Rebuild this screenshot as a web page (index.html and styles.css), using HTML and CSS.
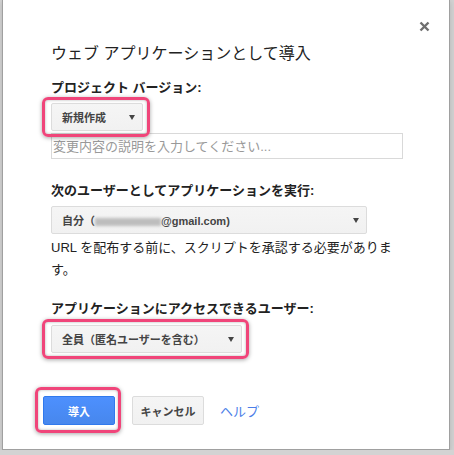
FILE: index.html
```html
<!DOCTYPE html>
<html lang="ja">
<head>
  <meta charset="UTF-8">
  <title>ウェブ アプリケーションとして導入</title>
  <link rel="stylesheet" href="styles.css">
</head>
<body>

  <!-- 導入ダイアログ -->
  <div class="dialog">
    <button class="close-btn" type="button" aria-label="閉じる">
      <svg width="11" height="11" viewBox="0 0 11 11">
        <path d="M1.5 1.5 L9.5 9.5 M9.5 1.5 L1.5 9.5" stroke="#6f6f6f" stroke-width="2.4" fill="none"/>
      </svg>
    </button>

    <div class="dialog-title">ウェブ アプリケーションとして導入</div>

    <div class="field-label label-version">プロジェクト バージョン:</div>
    <div class="mark mark-select mark-version">
      <div class="select select-version">
        <span>新規作成</span>
        <span class="arrow"></span>
      </div>
    </div>
    <input class="desc-input" type="text" placeholder="変更内容の説明を入力してください...">

    <div class="field-label label-run">次のユーザーとしてアプリケーションを実行:</div>
    <div class="select select-run">
      <span>自分（<span class="hidden-mail"></span>@gmail.com)</span>
      <span class="arrow"></span>
    </div>
    <p class="note">URL を配布する前に、スクリプトを承認する必要がありま す。</p>

    <div class="field-label label-access">アプリケーションにアクセスできるユーザー:</div>
    <div class="mark mark-select mark-access">
      <div class="select select-access">
        <span>全員（匿名ユーザーを含む）</span>
        <span class="arrow"></span>
      </div>
    </div>

    <div class="actions">
      <div class="mark mark-button">
        <button class="btn btn-primary" type="button">導入</button>
      </div>
      <button class="btn btn-cancel" type="button">キャンセル</button>
      <a class="help-link" href="#">ヘルプ</a>
    </div>
  </div>

</body>
</html>
```

FILE: styles.css
```css
body {
  margin: 0;
  background: #d3d3d3;
  font-family: "Liberation Sans", Arial, "Noto Sans CJK JP", sans-serif;
  color: #222;
}

.dialog {
  position: relative;
  box-sizing: border-box;
  width: 448px;
  height: 451px;
  margin: -1px 0 0 2px;
  padding: 44px 0 0 48px;
  background: #fff;
  border: 1px solid #a0a0a0;
  box-shadow: 0 2px 6px rgba(0, 0, 0, 0.15);
}

.close-btn {
  position: absolute;
  top: 21px;
  right: 19px;
  padding: 0;
  border: 0;
  background: none;
  line-height: 0;
  cursor: pointer;
}

.dialog-title {
  font-size: 16px;
  line-height: 20px;
}

.field-label {
  font-size: 13px;
  line-height: 16px;
  font-weight: bold;
}

.label-version { margin-top: 16px; }
.label-run { margin-top: 24px; }
.label-access { margin-top: 20px; }

/* ドロップダウン風のボタン */
.select {
  box-sizing: border-box;
  display: flex;
  align-items: center;
  justify-content: space-between;
  height: 28px;
  padding: 0 7px 0 10px;
  background: linear-gradient(#f5f5f5, #f1f1f1);
  border: 1px solid #dcdcdc;
  border-radius: 2px;
  font-size: 11px;
  font-weight: bold;
  color: #444;
}

.arrow {
  width: 0;
  height: 0;
  border-left: 3px solid transparent;
  border-right: 3px solid transparent;
  border-top: 5px solid #444;
}

.select-version { width: 92px; }

.select-run {
  width: 316px;
  margin-top: 7px;
}

.select-access { width: 191px; }

.hidden-mail {
  display: inline-block;
  width: 66px;
  height: 8px;
  background: #bdbdbd;
  filter: blur(1.5px);
  vertical-align: -1px;
}

.desc-input {
  display: block;
  box-sizing: border-box;
  width: 352px;
  height: 26px;
  margin-top: 2px;
  padding: 0 1px;
  border: 1px solid #d9d9d9;
  font-family: inherit;
  font-size: 13px;
  outline: none;
}

.desc-input::placeholder {
  color: #999;
}

.note {
  width: 350px;
  margin: 3px 0 0;
  font-size: 13px;
  line-height: 22px;
}

/* ピンクの強調枠 */
.mark {
  position: relative;
  width: max-content;
}

.mark::after {
  content: "";
  position: absolute;
  border: 3px solid #f0457a;
  border-radius: 6px;
  box-shadow: 0 1px 4px rgba(0, 0, 0, 0.35), inset 0 0 3px rgba(0, 0, 0, 0.3);
  pointer-events: none;
}

.mark-select::after {
  top: -6px;
  right: -7px;
  bottom: -6px;
  left: -9px;
}

.mark-version { margin-top: 7px; }
.mark-access { margin-top: 8px; }

.mark-button {
  margin-right: 17px;
}

.mark-button::after {
  top: -9px;
  right: -6px;
  bottom: -8px;
  left: -8px;
}

.actions {
  display: flex;
  align-items: center;
  margin: 43px 0 0 -8px;
}

.btn {
  box-sizing: border-box;
  display: block;
  width: 72px;
  height: 29px;
  padding: 0;
  background: linear-gradient(#f5f5f5, #f1f1f1);
  border: 1px solid #dcdcdc;
  border-radius: 2px;
  font-family: inherit;
  font-size: 11px;
  font-weight: bold;
  color: #444;
}

.btn-primary {
  background: linear-gradient(#4d90fe, #4787ed);
  border-color: #3079ed;
  color: #fff;
}

.btn-cancel {
  margin-right: 16px;
}

.help-link {
  font-size: 13px;
  color: #4b7ee8;
  text-decoration: none;
}
```
